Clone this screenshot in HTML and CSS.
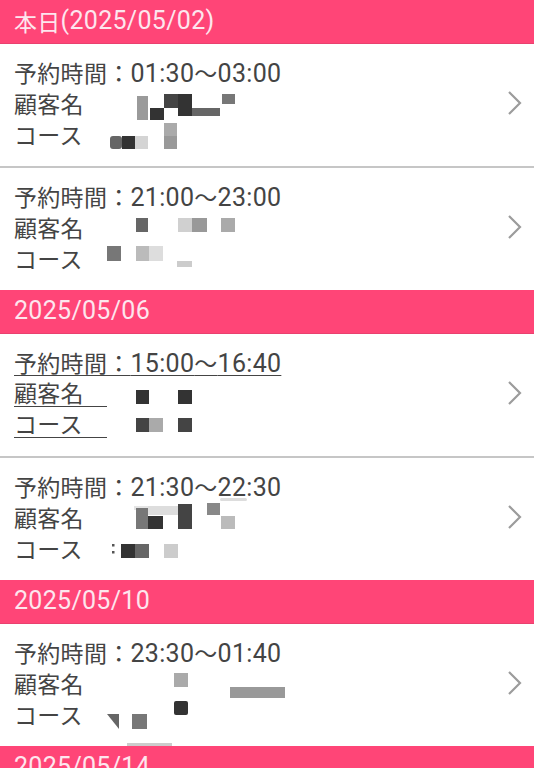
FILE: index.html
```html
<!DOCTYPE html>
<html lang="ja">
<head>
<meta charset="utf-8">
<title>予約一覧</title>
<link rel="stylesheet" href="styles.css">
</head>
<body>
<div class="list">
  <section class="day">
    <h2 class="day-head"><span class="jp">本日</span>(2025/05/02)</h2>
    <a class="item" href="#">
      <div class="lines">
        <div class="line"><span class="jp">予約時間：</span>01:30<span class="jp">〜</span>03:00</div>
        <div class="line"><span class="jp">顧客名</span></div>
        <div class="line"><span class="jp">コース</span></div>
      </div>
      <svg class="chev" viewBox="0 0 16 26"><polyline points="2,2 13,13 2,24"/></svg>
      <svg class="mosaic" viewBox="0 0 534 122">
        <rect x="137" y="52" width="11" height="24" fill="#9a9a9a"/>
        <rect x="150" y="64" width="14" height="12" fill="#333"/>
        <rect x="164" y="50" width="14" height="14" fill="#444"/>
        <rect x="178" y="50" width="14" height="22" fill="#333"/>
        <rect x="192" y="64" width="28" height="8" fill="#666"/>
        <rect x="222" y="50" width="13" height="10" fill="#777"/>
        <rect x="110" y="92" width="12" height="13" rx="3" fill="#666"/>
        <rect x="122" y="92" width="13" height="13" fill="#333"/>
        <rect x="135" y="92" width="13" height="13" fill="#d4d4d4"/>
        <rect x="164" y="79" width="13" height="13" fill="#aaa"/>
        <rect x="164" y="92" width="13" height="13" fill="#999"/>
      </svg>
    </a>
    <a class="item" href="#">
      <div class="lines">
        <div class="line"><span class="jp">予約時間：</span>21:00<span class="jp">〜</span>23:00</div>
        <div class="line"><span class="jp">顧客名</span></div>
        <div class="line"><span class="jp">コース</span></div>
      </div>
      <svg class="chev" viewBox="0 0 16 26"><polyline points="2,2 13,13 2,24"/></svg>
      <svg class="mosaic" viewBox="0 0 534 122">
        <rect x="136" y="52" width="12" height="14" fill="#666"/>
        <rect x="178" y="52" width="14" height="14" fill="#d0d0d0"/>
        <rect x="192" y="52" width="15" height="14" fill="#999"/>
        <rect x="221" y="52" width="14" height="14" fill="#aaa"/>
        <rect x="107" y="80" width="14" height="15" fill="#777"/>
        <rect x="136" y="80" width="13" height="15" fill="#bbb"/>
        <rect x="149" y="80" width="14" height="15" fill="#ddd"/>
        <rect x="177" y="95" width="15" height="6" fill="#ccc"/>
      </svg>
    </a>
  </section>

  <section class="day">
    <h2 class="day-head">2025/05/06</h2>
    <a class="item" href="#">
      <div class="lines">
        <div class="line ul"><span class="jp">予約時間：</span>15:00<span class="jp">〜</span>16:40</div>
        <div class="line"><span class="jp label-ul">顧客名</span></div>
        <div class="line"><span class="jp label-ul">コース</span></div>
      </div>
      <svg class="chev" viewBox="0 0 16 26"><polyline points="2,2 13,13 2,24"/></svg>
      <svg class="mosaic" viewBox="0 0 534 122">
        <rect x="136" y="56" width="13" height="14" fill="#333"/>
        <rect x="178" y="56" width="14" height="14" fill="#333"/>
        <rect x="136" y="84" width="13" height="14" fill="#444"/>
        <rect x="149" y="84" width="14" height="14" fill="#aaa"/>
        <rect x="178" y="84" width="14" height="14" fill="#444"/>
      </svg>
    </a>
    <a class="item" href="#">
      <div class="lines">
        <div class="line"><span class="jp">予約時間：</span>21:30<span class="jp">〜</span>22:30</div>
        <div class="line"><span class="jp">顧客名</span></div>
        <div class="line"><span class="jp">コース</span></div>
      </div>
      <svg class="chev" viewBox="0 0 16 26"><polyline points="2,2 13,13 2,24"/></svg>
      <svg class="mosaic" viewBox="0 0 534 122">
        <rect x="134" y="50" width="46" height="4" fill="#e4e4e4"/>
        <rect x="220" y="42" width="27" height="3" rx="1.5" fill="#ddd"/>
        <rect x="148" y="50" width="30" height="9" fill="#ddd"/>
        <rect x="136" y="52" width="12" height="21" fill="#777"/>
        <rect x="148" y="60" width="15" height="13" fill="#333"/>
        <rect x="178" y="48" width="14" height="25" fill="#444"/>
        <rect x="207" y="47" width="13" height="12" fill="#888"/>
        <rect x="221" y="60" width="14" height="13" fill="#bbb"/>
        <rect x="112" y="88" width="2.5" height="2.5" fill="#555"/>
        <rect x="112" y="95" width="2.5" height="2.5" fill="#555"/>
        <rect x="121" y="88" width="14" height="14" fill="#333"/>
        <rect x="135" y="88" width="14" height="14" fill="#666"/>
        <rect x="164" y="88" width="14" height="14" fill="#ccc"/>
      </svg>
    </a>
  </section>

  <section class="day">
    <h2 class="day-head">2025/05/10</h2>
    <a class="item" href="#">
      <div class="lines">
        <div class="line"><span class="jp">予約時間：</span>23:30<span class="jp">〜</span>01:40</div>
        <div class="line"><span class="jp">顧客名</span></div>
        <div class="line"><span class="jp">コース</span></div>
      </div>
      <svg class="chev" viewBox="0 0 16 26"><polyline points="2,2 13,13 2,24"/></svg>
      <svg class="mosaic" viewBox="0 0 534 122">
        <rect x="174" y="49" width="14" height="14" fill="#aaa"/>
        <rect x="230" y="63" width="55" height="11" fill="#999"/>
        <rect x="174" y="77" width="14" height="14" rx="2" fill="#333"/>
        <polygon points="107,90 119,90 119,105" fill="#666"/>
        <rect x="132" y="90" width="15" height="15" fill="#777"/>
        <rect x="127" y="119" width="45" height="3" fill="#ccc"/>
      </svg>
    </a>
  </section>

  <section class="day">
    <h2 class="day-head">2025/05/14</h2>
    <a class="item" href="#">
      <div class="lines">
        <div class="line"><span class="jp">予約時間：</span>20:00<span class="jp">〜</span>22:00</div>
        <div class="line"><span class="jp">顧客名</span></div>
        <div class="line"><span class="jp">コース</span></div>
      </div>
      <svg class="chev" viewBox="0 0 16 26"><polyline points="2,2 13,13 2,24"/></svg>
    </a>
  </section>
</div>
</body>
</html>
```

FILE: styles.css
```css
* {
  box-sizing: border-box;
}

html, body {
  margin: 0;
  padding: 0;
  background: #ffffff;
}

body {
  font-family: Roboto, "Noto Sans CJK JP", sans-serif;
  color: #444444;
  overflow: hidden;
}

.list {
  display: flex;
  flex-direction: column;
}

.day {
  display: flex;
  flex-direction: column;
}

.day-head {
  margin: 0;
  height: 44px;
  display: flex;
  align-items: center;
  padding: 0 0 2px 14px;
  background: #ff4577;
  border-bottom: 1px solid #e9416f;
  color: #fde6ee;
  font-size: 25px;
  font-weight: 400;
  letter-spacing: 0.3px;
}

.jp {
  font-family: "Noto Sans CJK JP", sans-serif;
  font-size: 23px;
}

.item {
  position: relative;
  display: flex;
  align-items: center;
  justify-content: space-between;
  height: 122px;
  padding: 0 11px 4px 14px;
  color: inherit;
  text-decoration: none;
  background: #fff;
}

.item + .item {
  border-top: 2px solid #c6c6c6;
  height: 124px;
}

.lines {
  display: flex;
  flex-direction: column;
}

.line {
  height: 31px;
  line-height: 31px;
  font-size: 25px;
  letter-spacing: 0.3px;
  white-space: nowrap;
}

.line.ul {
  text-decoration: underline;
  text-decoration-thickness: 1px;
  text-underline-offset: 3px;
}

.label-ul {
  display: inline-block;
  width: 93px;
  line-height: 27px;
  border-bottom: 1px solid #444;
}

.chev {
  width: 16px;
  height: 26px;
  flex: none;
}

.chev polyline {
  fill: none;
  stroke: #9c9c9c;
  stroke-width: 2.2;
}

.mosaic {
  position: absolute;
  left: 0;
  top: 0;
  width: 534px;
  height: 122px;
  pointer-events: none;
}

.item + .item .mosaic {
  top: -2px;
}
```
